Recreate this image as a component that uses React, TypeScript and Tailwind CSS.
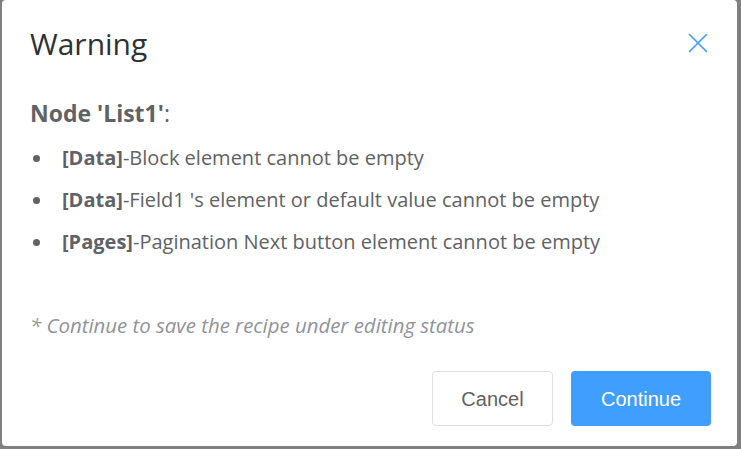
import { X } from "lucide-react";

const errors = [
    { tag: "[Data]", text: "Block element cannot be empty" },
    { tag: "[Data]", text: "Field1 's element or default value cannot be empty" },
    { tag: "[Pages]", text: "Pagination Next button element cannot be empty" },
];

export default function App() {
    return (
        <div className="w-[741px] h-[449px] bg-[#808080] pl-[2px] pr-[4px] pb-[3px] overflow-hidden">
            <div className="w-full h-full bg-white rounded-[4px] flex flex-col pl-[28px] pr-[26px] text-[#606266]" style={{ fontFamily: '"Open Sans", sans-serif' }}>
                <div className="flex items-center justify-between pt-[22px] h-[66px]">
                    <div className="text-[30px] text-[#303133] leading-none">Warning</div>
                    <X className="w-[34px] h-[34px] text-[#409eff] -mr-[4px] -mt-[3px]" strokeWidth={1.2} />
                </div>
                <div className="mt-[33px] text-[23px] leading-[28px]">
                    <span className="font-bold">Node 'List1'</span>:
                </div>
                <ul className="mt-[10px] flex flex-col">
                    {errors.map((e, i) => (
                        <li key={i} className="flex items-center h-[42px] text-[20px]">
                            <span className="w-[7px] h-[7px] rounded-full bg-[#606266] ml-[3px] mr-[22px]" />
                            <span className="font-bold">{e.tag}</span>
                            <span>-{e.text}</span>
                        </li>
                    ))}
                </ul>
                <div className="mt-[48px] italic text-[20.4px] leading-[28px] text-[#909399]">* Continue to save the recipe under editing status</div>
                <div className="flex justify-end gap-[18px] mt-[32px]" style={{ fontFamily: '"Liberation Sans", Arial, sans-serif' }}>
                    <button className="w-[121px] h-[55px] rounded-[4px] border border-[#dcdfe6] text-[20px] text-[#606266] bg-white">Cancel</button>
                    <button className="w-[140px] h-[55px] rounded-[4px] bg-[#409eff] text-[20px] text-white">Continue</button>
                </div>
            </div>
        </div>
    );
}
